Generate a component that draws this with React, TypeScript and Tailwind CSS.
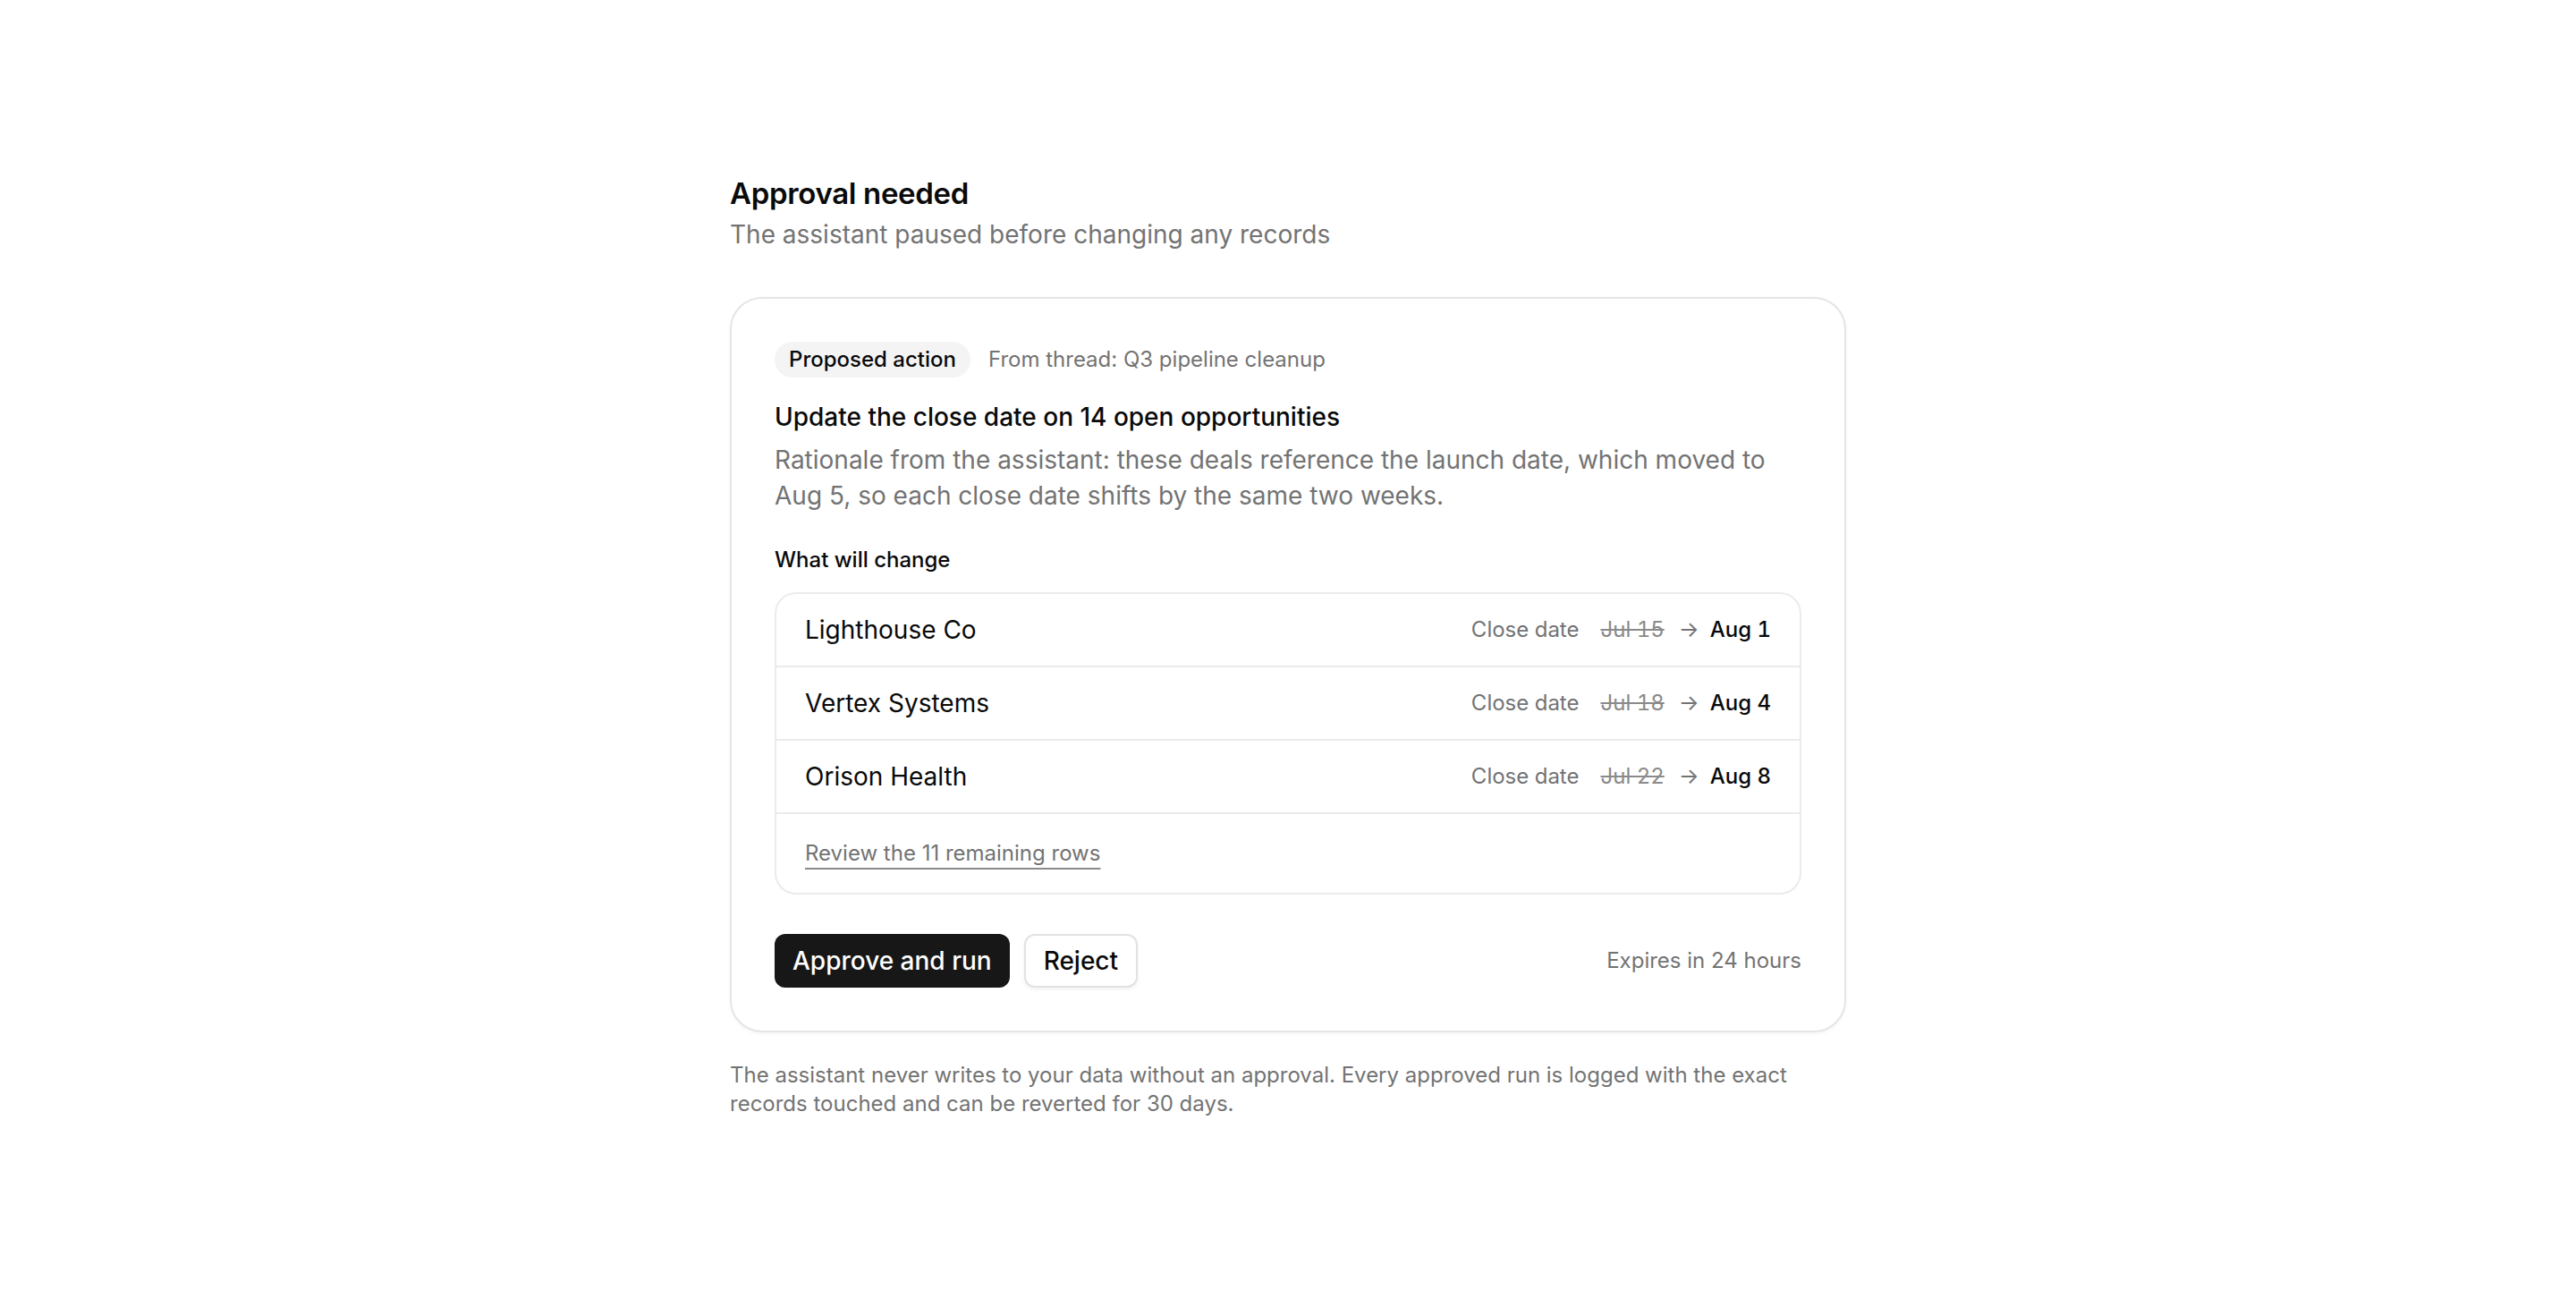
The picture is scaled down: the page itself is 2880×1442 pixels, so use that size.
import React from 'react';

interface ChangeRow {
  name: string;
  from: string;
  to: string;
}

const rows: ChangeRow[] = [
  { name: 'Lighthouse Co', from: 'Jul 15', to: 'Aug 1' },
  { name: 'Vertex Systems', from: 'Jul 18', to: 'Aug 4' },
  { name: 'Orison Health', from: 'Jul 22', to: 'Aug 8' },
];

const App: React.FC = () => {
  return (
    <div
      className="min-h-screen bg-white flex items-center justify-center text-[#0a0a0a]"
      style={{ fontFamily: 'Inter, "Noto Sans", sans-serif' }}
    >
      <div className="w-[1248px]">
        <h1 className="text-[33px] leading-[48px] font-semibold tracking-[-0.01em]">Approval needed</h1>
        <p className="text-[28px] leading-[44px] text-[#737373]">
          The assistant paused before changing any records
        </p>

        <div className="mt-12 rounded-[36px] border-2 border-[#e5e5e5] bg-white p-12 shadow-[0_2px_4px_rgba(0,0,0,0.04)]">
          <div className="flex items-center gap-5">
            <span className="rounded-full bg-[#f4f4f4] px-4 text-[24px] leading-10 font-medium">
              Proposed action
            </span>
            <span className="text-[24px] leading-10 text-[#737373]">From thread: Q3 pipeline cleanup</span>
          </div>

          <h2 className="mt-6 text-[28px] leading-10 font-medium">
            Update the close date on 14 open opportunities
          </h2>
          <p className="mt-2 text-[28px] leading-10 text-[#737373]">
            Rationale from the assistant: these deals reference the launch date, which moved to Aug 5, so each
            close date shifts by the same two weeks.
          </p>

          <div className="mt-8 text-[24px] leading-10 font-medium">What will change</div>

          <div className="mt-4 rounded-3xl border-2 border-[#ebebeb] overflow-hidden">
            {rows.map((row) => (
              <div
                key={row.name}
                className="flex items-center justify-between border-b-2 border-[#ebebeb] px-8 py-5"
              >
                <span className="text-[28px] leading-10">{row.name}</span>
                <div className="flex items-center text-[24px] leading-10 tabular-nums">
                  <span className="text-[#737373]">Close date</span>
                  <span className="ml-6 text-[#8a8a8a] line-through">{row.from}</span>
                  <span className="ml-4 text-[#737373]">→</span>
                  <span className="ml-3 font-medium">{row.to}</span>
                </div>
              </div>
            ))}
            <div className="px-8 pt-6 pb-6">
              <a
                href="#"
                className="text-[24px] leading-10 text-[#737373] underline decoration-[#8a8a8a] decoration-2 underline-offset-8"
              >
                Review the 11 remaining rows
              </a>
            </div>
          </div>

          <div className="mt-11 flex items-center justify-between">
            <div className="flex items-center gap-4">
              <button className="h-[60px] rounded-xl bg-[#171717] px-5 text-[28px] font-medium text-white">
                Approve and run
              </button>
              <button className="h-[60px] rounded-xl border-2 border-[#e2e2e2] bg-white px-5 text-[28px] font-medium shadow-[0_2px_4px_rgba(0,0,0,0.06)]">
                Reject
              </button>
            </div>
            <span className="text-[24px] text-[#737373]">Expires in 24 hours</span>
          </div>
        </div>

        <p className="mt-8 text-[24px] leading-8 text-[#737373]">
          The assistant never writes to your data without an approval. Every approved run is logged with the
          exact records touched and can be reverted for 30 days.
        </p>
      </div>
    </div>
  );
};

export default App;
